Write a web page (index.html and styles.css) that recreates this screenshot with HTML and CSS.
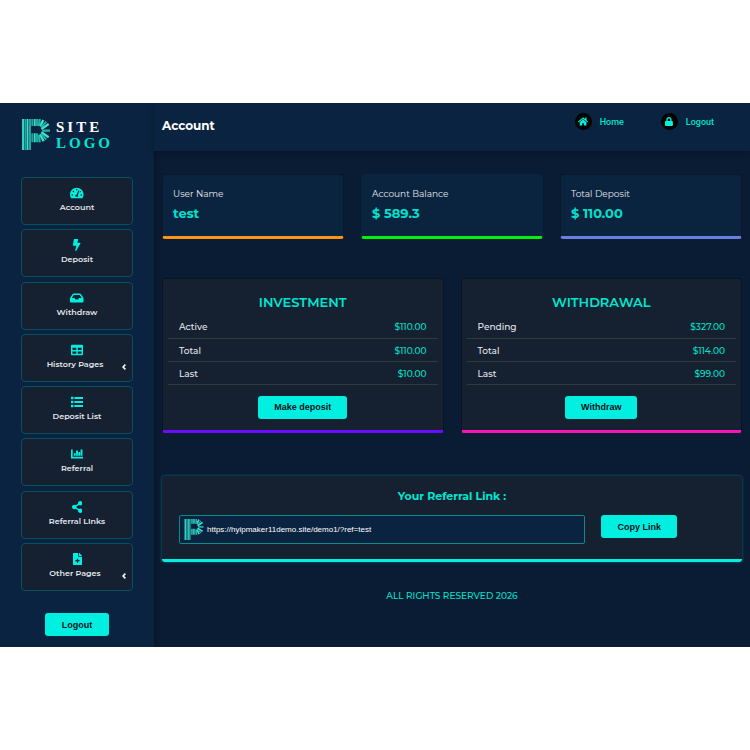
FILE: index.html
```
<!DOCTYPE html>
<html lang="en">
<head>
  <meta charset="UTF-8" />
  <meta name="viewport" content="width=device-width, initial-scale=1.0" />
  <title>Account</title>
  <link rel="stylesheet" href="styles.css">
</head>
<body>
  <svg class="defs" width="0" height="0" aria-hidden="true">
    <symbol id="mark" viewBox="0 0 84 93">
      <g fill="#1fa89f">
        <rect x="0" width="7" height="93" fill="#35d0c1" />
        <rect x="8" width="5" height="93" />
        <rect x="14" width="5" height="93" fill="#3fe0cf" />
        <rect x="20" width="7" height="93" />
        <path d="M28 0h5v21h-5zM28 43h5v27h-5zM42 0h6v21h-6zM42 43h6v27h-6z" />
        <path d="M35 0h6v21h-6zM35 43h6v27h-6z" fill="#3fe0cf" />
      </g>
      <g stroke="#3fe0cf" stroke-width="7">
        <path d="M54 22L64 3M58 30L80 15M58 40L80 55M54 46L65 67" />
        <path d="M60 35L84 35M51 48L53 70M51 21L53 0" stroke="#23b5aa" />
        <path d="M57 25L73 8M57 44L73 62" stroke="#23b5aa" stroke-width="5" />
      </g>
    </symbol>
  </svg>

  <div class="app">
    <aside class="sidebar">
      <a class="logo" href="#">
        <svg class="logo-mark"><use href="#mark" /></svg>
        <div class="logo-text">
          <div>SITE</div>
          <div class="accent">LOGO</div>
        </div>
      </a>
      <nav class="menu">
        <a class="menu-item" href="#">
          <svg viewBox="0 0 576 512"><path d="M288 32C128.900 32 0 160.900 0 320c0 52.800 14.300 102.300 39 144.800 5.700 9.600 16.400 15.200 27.500 15.200h443c11.100 0 21.800-5.600 27.500-15.200C561.700 422.300 576 372.800 576 320 576 160.900 447.100 32 288 32z" /><g class="cut"><circle cx="288" cy="112" r="32" /><circle cx="144" cy="192" r="32" /><circle cx="96" cy="336" r="32" /><circle cx="480" cy="336" r="32" /><circle cx="440" cy="200" r="28" /><path d="M352 150l46 14-62 186a64 64 0 0 1 8 66H232a64 64 0 0 1 58-96z" /></g></svg>
          <span>Account</span>
        </a>
        <a class="menu-item" href="#">
          <svg viewBox="0 0 320 512"><path d="M296 160H180.600l42.600-129.800C227.200 15 215.700 0 200 0H56C44 0 33.800 8.900 32.200 20.800l-32 240C-1.700 275.200 9.500 288 24 288h118.700L96.600 482.500c-3.600 15.200 8 29.500 23.300 29.500 8.400 0 16.400-4.400 20.800-12l176-304c9.300-15.900-2.200-36-20.700-36z" /></svg>
          <span>Deposit</span>
        </a>
        <a class="menu-item" href="#">
          <svg viewBox="0 0 576 512"><path d="M567.900 243.900L462.300 85.400A48 48 0 0 0 422.300 64H153.700a48 48 0 0 0-39.900 21.400L8 243.900A48 48 0 0 0 0 270.500V400c0 26.500 21.500 48 48 48h480c26.500 0 48-21.500 48-48V270.500a48 48 0 0 0-8.100-26.600zM162.300 128h251.500l85.300 128H376l-32 64H232l-32-64H76.900l85.400-128z" /></svg>
          <span>Withdraw</span>
        </a>
        <a class="menu-item has-sub" href="#">
          <svg viewBox="0 0 512 512"><path d="M464 32H48C21.500 32 0 53.500 0 80v352c0 26.500 21.500 48 48 48h416c26.500 0 48-21.500 48-48V80c0-26.500-21.500-48-48-48zM224 416H64v-96h160v96zm0-160H64v-96h160v96zm224 160H288v-96h160v96zm0-160H288v-96h160v96z" /></svg>
          <span>History Pages</span>
          <svg class="arrow" viewBox="0 0 4 6"><path d="M3.400 0.600L1 3l2.400 2.400" /></svg>
        </a>
        <a class="menu-item" href="#">
          <svg viewBox="0 0 512 512"><path d="M0 32h104v104H0zM144 40h368v88H144zM0 204h104v104H0zM144 212h368v88H144zM0 376h104v104H0zM144 384h368v88H144z" /></svg>
          <span>Deposit List</span>
        </a>
        <a class="menu-item" href="#">
          <svg viewBox="0 0 512 512"><path d="M0 64h72v312h440v72H0zM120 224h80v104h-80zM216 110h80v218h-80zM312 170h80v158h-80zM408 64h80v264h-80z" /></svg>
          <span>Referral</span>
        </a>
        <a class="menu-item" href="#">
          <svg viewBox="0 0 448 512"><path d="M352 320c-22.600 0-43.400 7.800-59.800 20.900l-102.500-64a96.600 96.600 0 0 0 0-41.700l102.500-64.100C308.600 184.200 329.400 192 352 192c53 0 96-43 96-96S405 0 352 0s-96 43-96 96c0 7.200.8 14.100 2.300 20.800l-102.500 64.100C139.400 167.800 118.600 160 96 160c-53 0-96 43-96 96s43 96 96 96c22.600 0 43.400-7.800 59.800-20.900l102.500 64.100A96.300 96.300 0 0 0 256 416c0 53 43 96 96 96s96-43 96-96-43-96-96-96z" /></svg>
          <span>Referral LInks</span>
        </a>
        <a class="menu-item has-sub" href="#">
          <svg viewBox="0 0 384 512"><path d="M224 136V0H24C10.700 0 0 10.700 0 24v464c0 13.300 10.700 24 24 24h336c13.300 0 24-10.700 24-24V160H248c-13.200 0-24-10.800-24-24zM384 121.900v6.100H256V0h6.100c6.400 0 12.500 2.500 17 7l97.900 98c4.500 4.500 7 10.600 7 16.900z" /><path class="cut" d="M164 240h56v60h60v56h-60v60h-56v-60h-60v-56h60z" /></svg>
          <span>Other Pages</span>
          <svg class="arrow" viewBox="0 0 4 6"><path d="M3.400 0.600L1 3l2.400 2.400" /></svg>
        </a>
      </nav>
      <button class="btn" type="button">Logout</button>
    </aside>

    <div class="page">
      <header class="topbar">
        <h1>Account</h1>
        <div class="top-links">
          <a href="#">
            <span class="circle"><svg viewBox="0 0 576 512"><path d="M280.400 148.300L96 300.100V464a16 16 0 0 0 16 16l112-.3a16 16 0 0 0 16-16V368a16 16 0 0 1 16-16h64a16 16 0 0 1 16 16v95.600a16 16 0 0 0 16 16L464 480a16 16 0 0 0 16-16V300L295.700 148.300a12.200 12.200 0 0 0-15.300 0zM571.600 251.500L488 182.600V44a12 12 0 0 0-12-12h-56a12 12 0 0 0-12 12v72.700L318.500 43a48 48 0 0 0-61 0L4.300 251.500a12 12 0 0 0-1.600 16.900l25.500 31A12 12 0 0 0 45.200 301l235.200-193.700a12.200 12.200 0 0 1 15.300 0L530.900 301a12 12 0 0 0 16.900-1.600l25.500-31a12 12 0 0 0-1.700-16.900z" /></svg></span>
            Home
          </a>
          <a href="#">
            <span class="circle"><svg viewBox="0 0 448 512"><path d="M400 224h-24v-72C376 68.200 307.800 0 224 0S72 68.200 72 152v72H48c-26.500 0-48 21.500-48 48v192c0 26.500 21.500 48 48 48h352c26.500 0 48-21.500 48-48V272c0-26.500-21.500-48-48-48zm-104 0H152v-72c0-39.700 32.300-72 72-72s72 32.300 72 72v72z" /></svg></span>
            Logout
          </a>
        </div>
      </header>

      <main class="content">
        <section class="stats">
          <div class="stat orange">
            <p>User Name</p>
            <strong>test</strong>
          </div>
          <div class="stat green">
            <p>Account Balance</p>
            <strong>$ 589.3</strong>
          </div>
          <div class="stat blue">
            <p>Total Deposit</p>
            <strong>$ 110.00</strong>
          </div>
        </section>

        <section class="panels">
          <div class="panel purple">
            <h2>INVESTMENT</h2>
            <table>
              <tr><th scope="row">Active</th><td>$110.00</td></tr>
              <tr><th scope="row">Total</th><td>$110.00</td></tr>
              <tr><th scope="row">Last</th><td>$10.00</td></tr>
            </table>
            <button class="btn" type="button">Make deposit</button>
          </div>
          <div class="panel pink">
            <h2>WITHDRAWAL</h2>
            <table>
              <tr><th scope="row">Pending</th><td>$327.00</td></tr>
              <tr><th scope="row">Total</th><td>$114.00</td></tr>
              <tr><th scope="row">Last</th><td>$99.00</td></tr>
            </table>
            <button class="btn" type="button">Withdraw</button>
          </div>
        </section>

        <section class="referral">
          <label for="ref-link">Your Referral Link :</label>
          <div class="ref-row">
            <div class="ref-box">
              <svg><use href="#mark" /></svg>
              <input id="ref-link" type="text" value="https://hyipmaker11demo.site/demo1/?ref=test" readonly>
            </div>
            <button class="btn" type="button">Copy Link</button>
          </div>
        </section>
      </main>

      <footer>ALL RIGHTS RESERVED 2026</footer>
    </div>
  </div>
</body>
</html>
```
FILE: styles.css
```
* {
  box-sizing: border-box;
  margin: 0;
  padding: 0;
}

body {
  min-height: 100vh;
  display: flex;
  align-items: center;
  background-color: #fff;
  font-family: Montserrat, Inter, sans-serif;
  font-size: 9px;
  line-height: 12px;
  color: #e4e8ee;
}

a {
  color: inherit;
  text-decoration: none;
}

.defs {
  position: absolute;
}

.app {
  width: 100%;
  display: flex;
  overflow: hidden;
  background-color: #0a1b34;
}

/* sidebar */
.sidebar {
  width: 154px;
  flex-shrink: 0;
  display: flex;
  flex-direction: column;
  align-items: center;
  padding: 16px 21px 11px;
  background-color: #0a2340;
  box-shadow: 0 0 6px rgba(0, 0, 0, 0.4);
}

.logo {
  align-self: flex-start;
  display: flex;
  gap: 6px;
  margin-left: 1px;
}

.logo-mark {
  width: 28px;
  height: 31px;
}

.logo-text {
  height: 31px;
  font-family: "Liberation Serif", serif;
  font-size: 15px;
  font-weight: bold;
  line-height: 16px;
  letter-spacing: 3px;
  color: #fff;
}

.accent {
  color: #00e6d2;
}

.menu {
  width: 112px;
  flex: 1;
  display: flex;
  flex-direction: column;
  justify-content: space-between;
  margin: 27px 0 22px;
}

.menu-item {
  position: relative;
  height: 48px;
  display: flex;
  flex-direction: column;
  align-items: center;
  gap: 2px;
  padding-top: 9px;
  border: 1px solid #07505c;
  border-radius: 4px;
  background-color: #152030;
  font-size: 8px;
  font-weight: 600;
}

.menu-item svg {
  height: 12px;
  fill: #00efe0;
}

.menu-item .cut {
  fill: #152030;
}

.has-sub span {
  padding-right: 4px;
}

.menu-item .arrow {
  position: absolute;
  right: 6px;
  bottom: 11px;
  width: 4px;
  height: 6px;
  fill: none;
  stroke: #fff;
  stroke-width: 1.5;
}

.btn {
  min-width: 64px;
  height: 23px;
  padding: 0 16px;
  border: none;
  border-radius: 3px;
  background-color: #00efe0;
  color: #04121c;
  font: bold 9px "Liberation Sans", sans-serif;
  cursor: pointer;
}

/* header */
.page {
  flex: 1;
  min-width: 0;
}

.topbar {
  height: 48px;
  display: flex;
  justify-content: space-between;
  padding: 10px 36px 0 8px;
  background-color: #0a2340;
  box-shadow: 0 1px 6px rgba(0, 0, 0, 0.3);
}

.topbar h1 {
  padding-top: 5px;
  font-size: 12px;
  line-height: 16px;
  color: #fff;
}

.top-links {
  display: flex;
  align-items: flex-start;
  gap: 37px;
  font-family: Roboto, sans-serif;
  font-size: 9px;
  font-weight: 500;
  color: #00e0cc;
}

.top-links a {
  display: flex;
  align-items: center;
  gap: 8px;
}

.circle {
  width: 17px;
  height: 17px;
  display: flex;
  align-items: center;
  justify-content: center;
  border-radius: 50%;
  background-color: #000;
}

.circle svg {
  height: 9px;
  fill: #00efe0;
}

/* content */
.content {
  display: flex;
  flex-direction: column;
  padding: 23px 8px 0;
}

.stats {
  display: grid;
  grid-template-columns: repeat(3, 1fr);
  gap: 17px;
}

.stat {
  height: 65px;
  padding: 13px 10px 0;
  border: 1px solid #0b1826;
  border-bottom: 3px solid;
  border-radius: 3px;
  background-color: #0a233f;
}

.stat strong {
  display: block;
  margin-top: 3px;
  font-size: 13px;
  font-weight: 700;
  line-height: 20px;
  color: #00e0cc;
}

.panels {
  display: grid;
  grid-template-columns: repeat(2, 1fr);
  gap: 17px;
  margin: 39px 0 43px;
}

.panel {
  height: 155px;
  display: flex;
  flex-direction: column;
  align-items: center;
  padding: 15px 5px 0;
  border: 1px solid #0b1520;
  border-bottom: 3px solid;
  border-radius: 3px;
  background-color: #152131;
}

.orange { border-bottom-color: #ff9416; }
.green { border-color: #0a233f; border-bottom-color: #00f010; }
.blue { border-bottom-color: #6a7fe0; }
.purple { border-bottom-color: #6a0cff; }
.pink { border-bottom-color: #ff14b8; }

.panel h2 {
  margin-bottom: 5px;
  font-size: 13px;
  font-weight: 600;
  line-height: 16px;
  color: #00e6d2;
}

.panel table {
  width: 100%;
  margin-bottom: 11px;
  border-collapse: collapse;
}

.panel tr {
  height: 23px;
  border-bottom: 1px solid #34393e;
}

.panel th {
  padding: 2px 0 0 11px;
  text-align: left;
  font-weight: 500;
}

.panel td {
  padding: 2px 11px 0 0;
  text-align: right;
  font-weight: 500;
  color: #00e0cc;
}

.referral {
  padding: 13px 65px 15px 17px;
  border-bottom: 3px solid #00efe0;
  border-radius: 3px;
  background-color: #152131;
  box-shadow: 0 0 3px rgba(0, 239, 224, 0.4);
}

.referral label {
  display: block;
  margin: 0 -48px 11px 0;
  text-align: center;
  font-size: 11px;
  font-weight: 700;
  line-height: 15px;
  color: #00e6d2;
}

.ref-row {
  display: flex;
  align-items: flex-start;
  gap: 16px;
}

.ref-box {
  flex: 1;
  height: 29px;
  display: flex;
  align-items: center;
  gap: 3px;
  padding-left: 4px;
  border: 1px solid #0a8a8a;
  border-radius: 2px;
  background-color: #0a2340;
}

.ref-box svg {
  width: 20px;
  height: 21px;
}

.ref-box input {
  flex: 1;
  min-width: 0;
  border: none;
  outline: none;
  background: none;
  color: #fff;
  font: 8px "Liberation Sans", sans-serif;
}

footer {
  padding: 28px 0 45px;
  text-align: center;
  font-weight: 500;
  color: #00e0cc;
}
```
